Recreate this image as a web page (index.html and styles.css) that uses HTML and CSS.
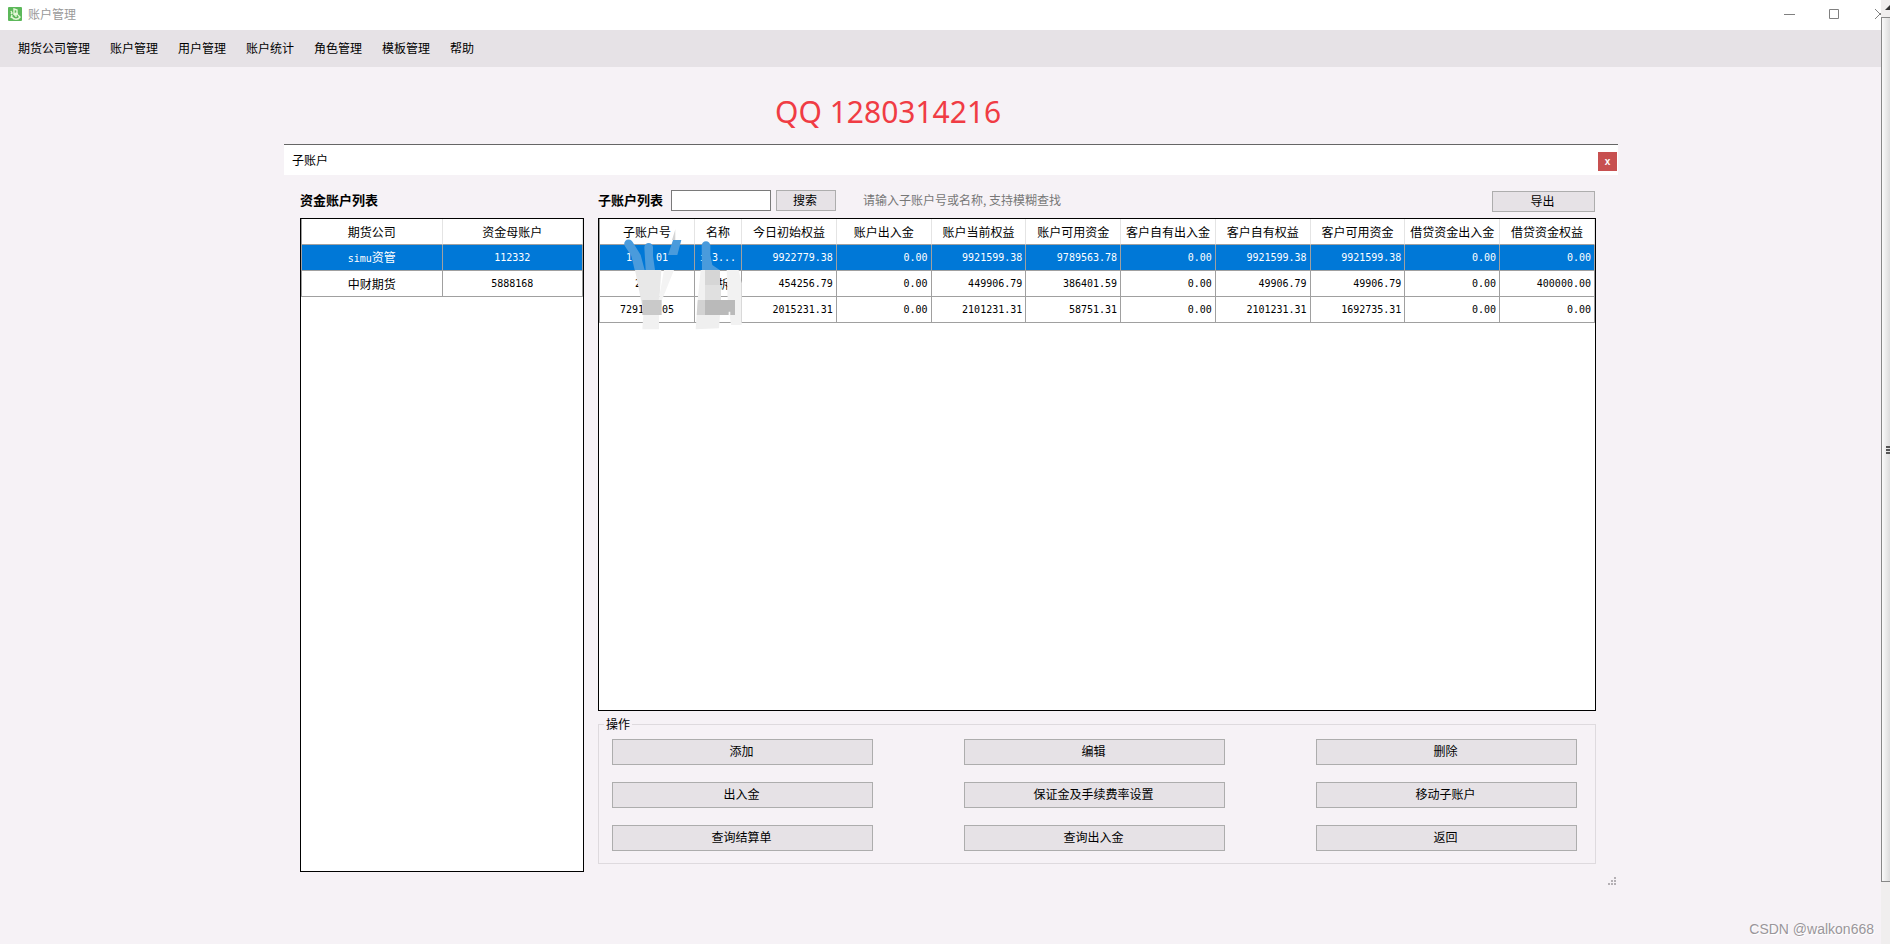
FILE: index.html
```html
<!DOCTYPE html>
<html lang="zh-CN">
<head>
<meta charset="utf-8">
<title>账户管理</title>
<link rel="stylesheet" href="styles.css">
</head>
<body>
<div class="app">
  <header class="titlebar">
    <svg class="app-icon" viewBox="0 0 14 14" aria-hidden="true">
      <rect width="14" height="14" rx="1" fill="#5cb85a"/>
      <path d="M6 2l3 1v3l-3 1zM3 4l1 2-1 1M4 8l-1 3M6 8l4-1M8 7v3M4 10c2 3 6 3 8 0l-2-2" fill="none" stroke="#e4f8d8" stroke-width="1.4"/>
    </svg>
    <span class="app-title">账户管理</span>
    <div class="window-controls">
      <button class="window-button" type="button" aria-label="最小化"><svg width="12" height="12" viewBox="0 0 12 12"><path d="M0 6.5h11" /></svg></button>
      <button class="window-button" type="button" aria-label="最大化"><svg width="12" height="12" viewBox="0 0 12 12"><path d="M.5 1.500h9v9h-9z"/></svg></button>
      <button class="window-button window-close" type="button" aria-label="关闭"><svg width="7" height="12" viewBox="0 0 7 12"><path d="M1 1l5 5-5 5M6.500 5v2"/></svg></button>
    </div>
  </header>
  <nav class="menubar">
    <button type="button">期货公司管理</button>
    <button type="button">账户管理</button>
    <button type="button">用户管理</button>
    <button type="button">账户统计</button>
    <button type="button">角色管理</button>
    <button type="button">模板管理</button>
    <button type="button">帮助</button>
  </nav>
  <main class="workspace">
    <p class="contact">QQ 1280314216</p>
    <section class="dialog">
      <header class="dialog-title">
        <span>子账户</span>
        <button class="dialog-close" type="button" aria-label="关闭">x</button>
      </header>
      <div class="dialog-body">
        <div class="funds">
          <div class="toolbar"><h2>资金账户列表</h2></div>
          <div class="grid-box">
            <table class="grid centered">
              <thead><tr><th>期货公司</th><th>资金母账户</th></tr></thead>
              <tbody>
                <tr class="selected"><td>simu<span class="cjk">资管</span></td><td>112332</td></tr>
                <tr><td class="cjk">中财期货</td><td>5888168</td></tr>
              </tbody>
            </table>
          </div>
        </div>
        <div class="subs">
          <div class="toolbar">
            <h2><label for="search">子账户列表</label></h2>
            <input id="search" type="text">
            <button class="btn search-btn" type="button">搜索</button>
            <span class="hint">请输入子账户号或名称, 支持模糊查找</span>
            <button class="btn export-btn" type="button">导出</button>
          </div>
          <div class="grid-box">
            <table class="grid">
              <colgroup><col class="col-id"><col class="col-name"><col span="9"></colgroup>
              <thead>
                <tr><th>子账户号</th><th>名称</th><th>今日初始权益</th><th>账户出入金</th><th>账户当前权益</th><th>账户可用资金</th><th>客户自有出入金</th><th>客户自有权益</th><th>客户可用资金</th><th>借贷资金出入金</th><th>借贷资金权益</th></tr>
              </thead>
              <tbody>
                <tr class="selected"><td class="mid">1. : 01</td><td class="mid">i 3...</td><td>9922779.38</td><td>0.00</td><td>9921599.38</td><td>9789563.78</td><td>0.00</td><td>9921599.38</td><td>9921599.38</td><td>0.00</td><td>0.00</td></tr>
                <tr><td class="mid">2  .</td><td class="mid cjk">　拆</td><td>454256.79</td><td>0.00</td><td>449906.79</td><td>386401.59</td><td>0.00</td><td>49906.79</td><td>49906.79</td><td>0.00</td><td>400000.00</td></tr>
                <tr><td class="mid">7291   05</td><td class="mid">   ,</td><td>2015231.31</td><td>0.00</td><td>2101231.31</td><td>58751.31</td><td>0.00</td><td>2101231.31</td><td>1692735.31</td><td>0.00</td><td>0.00</td></tr>
              </tbody>
            </table>
            <svg class="smudge" viewBox="90 141 375 312" aria-hidden="true">
              <g fill="#4a9bdc">
                <path d="M104 197a13 13 0 0 1 24-11l24 39 12 45h-30l-10-42z"/>
                <path d="M163 202a13 13 0 0 1 26 0v26l6 42h-28z"/>
                <path d="M249 180h25l-12 45h-28z"/>
                <path d="M335 197a13 13 0 0 1 26 0v28l6 30 22 15h-53z"/>
              </g>
              <path d="M256 148v32h-10z" fill="#d4d4d4"/>
              <path d="M135 270h79l-6 90-2 45h-44z" fill="#e8e8e8"/>
              <path d="M222 270h30l-36 90h-10z" fill="#f3f3f3"/>
              <path d="M160 405h47v43h-50z" fill="#f1f1f1"/>
              <path d="M157 360h58v45h-58z" fill="#c9c9c9"/>
              <path d="M332 270h13v90h-22z" fill="#f1f1f1"/>
              <path d="M345 270h45v45h-45z" fill="#d6d6d6"/>
              <path d="M345 315h48v45h-48z" fill="#e0e0e0"/>
              <path d="M410 270h36l9 40v125h-32l-10-75z" fill="#f2f2f2"/>
              <path d="M323 360h22v45h-25z" fill="#d2d2d2"/>
              <path d="M345 360h90v45h-14v-10h-5v10h-71z" fill="#bababa"/>
              <path d="M320 405h70l-3 40-70 3z" fill="#efefef"/>
            </svg>
          </div>
          <fieldset class="actions">
            <legend>操作</legend>
            <button class="btn" type="button">添加</button>
            <button class="btn" type="button">编辑</button>
            <button class="btn" type="button">删除</button>
            <button class="btn" type="button">出入金</button>
            <button class="btn" type="button">保证金及手续费率设置</button>
            <button class="btn" type="button">移动子账户</button>
            <button class="btn" type="button">查询结算单</button>
            <button class="btn" type="button">查询出入金</button>
            <button class="btn" type="button">返回</button>
          </fieldset>
        </div>
      </div>
      <svg class="grip" viewBox="0 0 8 8" aria-hidden="true"><path d="M6 0h2v2H6zM3 3h2v2H3zM6 3h2v2H6zM0 6h2v2H0zM3 6h2v2H3zM6 6h2v2H6z" fill="#b4b0b4"/></svg>
    </section>
  </main>
  <span class="watermark">CSDN @walkon668</span>
</div>
<div class="scrollbar" aria-hidden="true">
  <svg class="scroll-arrow" viewBox="0 0 9 17"><path d="M9 5v5H4z" fill="#333"/></svg>
  <div class="thumb"><i></i><i></i><i></i></div>
</div>
</body>
</html>
```
FILE: styles.css
```css
* { box-sizing: border-box; }

body {
  margin: 0;
  display: flex;
  min-height: 100vh;
  background: #f6f2f6;
  color: #000;
  font: 12px/16px "Noto Sans CJK SC", sans-serif;
}

button, input { font: inherit; color: inherit; margin: 0; padding: 0; }
h2, p { margin: 0; }

.app { flex: 1; min-width: 0; display: flex; flex-direction: column; position: relative; }

.titlebar {
  height: 30px;
  display: flex;
  align-items: center;
  padding-left: 8px;
  padding-bottom: 2px;
  background: #fff;
  color: #999;
}
.app-icon { width: 14px; height: 14px; margin-right: 6px; }
.window-controls { margin-left: auto; display: flex; gap: 33px; }
.window-button { display: flex; border: 0; background: none; }
.window-button svg { fill: none; stroke: #808080; }

.menubar { height: 37px; display: flex; align-items: center; gap: 20px; padding: 0 18px 2px; background: #e6e2e6; }
.menubar button { border: 0; background: none; }

.workspace { flex: 1; display: flex; flex-direction: column; padding: 23px 263px 59px 284px; }

.contact {
  align-self: flex-start;
  margin: 0 0 10px 491px;
  color: #f03c44;
  font: 30px/44px "Noto Sans", sans-serif;
}

.dialog { flex: 1; display: flex; flex-direction: column; border-top: 1px solid #666; }
.dialog-title {
  height: 30px;
  display: flex;
  align-items: center;
  justify-content: space-between;
  padding: 0 1px 0 8px;
  background: #fff;
}
.dialog-close {
  width: 19px;
  height: 19px;
  margin-top: 3px;
  border: 0;
  background: #c75050;
  color: #fff;
  font: bold 10px/16px "Liberation Sans", sans-serif;
}
.dialog-body { flex: 1; display: flex; gap: 14px; padding: 13px 22px 5px 16px; }
.funds { width: 284px; display: flex; flex-direction: column; }
.subs { flex: 1; min-width: 0; display: flex; flex-direction: column; padding-bottom: 8px; }

.toolbar { height: 30px; display: flex; align-items: flex-start; padding-top: 2px; line-height: 20px; }
.toolbar h2 { font-size: 13px; line-height: 20px; font-weight: bold; }
.toolbar input { width: 100px; height: 21px; margin-left: 8px; border: 1px solid #7a7a7a; background: #fff; }
.btn { border: 1px solid #adadad; background: #e6e2e6; padding: 0 2px 2px 0; line-height: 16px; }
.search-btn { width: 60px; height: 21px; margin-left: 5px; }
.hint { margin-left: 27px; color: #777; }
.export-btn { width: 103px; height: 21px; margin: 1px 1px 0 auto; }

.grid-box { flex: 1; position: relative; border: 1px solid #000; background: #fff; }
.grid { width: 100%; table-layout: fixed; border-collapse: separate; border-spacing: 0; border-left: 1px solid #a0a0a0; }
.grid th, .grid td { height: 26px; padding: 0 3px; border: 0 solid #a0a0a0; border-width: 0 1px 1px 0; overflow: hidden; white-space: pre; }
.grid th { padding: 0; font-weight: normal; border-right-color: #e4e4e4; }
.grid td { padding-top: 1px; text-align: right; font-family: "DejaVu Sans Mono", "Noto Sans CJK SC", monospace; font-size: 10px; line-height: 16px; }
.grid .cjk { font-family: "Noto Sans CJK SC", sans-serif; font-size: 12px; }
.grid .mid, .centered td { text-align: center; }
.grid .selected td { background: #0078d7; color: #fff; }
.col-id { width: 95px; }
.col-name { width: 47px; }
.smudge { position: absolute; left: 21px; top: 8px; width: 125px; height: 104px; }

.actions {
  display: grid;
  grid-template-columns: repeat(3, 1fr);
  gap: 17px 91px;
  margin: 4px 0 0;
  padding: 6px 18px 12px 13px;
  border: 1px solid #dedade;
}
.actions legend { margin-left: -8px; padding: 0 2px; line-height: 18px; }
.actions .btn { height: 26px; }

.grip { width: 8px; height: 8px; align-self: flex-end; margin-right: 2px; }

.watermark {
  position: absolute;
  right: 7px;
  bottom: 6px;
  color: #9a969a;
  font: 14px/18px "Liberation Sans", sans-serif;
  text-shadow: 1px 1px 0 #fff;
}

.scrollbar { width: 9px; display: flex; flex-direction: column; padding-bottom: 62px; background: #f0eeee; }
.scroll-arrow { width: 9px; height: 17px; }
.thumb {
  flex: 1;
  display: flex;
  flex-direction: column;
  justify-content: center;
  align-items: flex-end;
  gap: 1px;
  border: 1px solid #888;
  border-right: 0;
  background: linear-gradient(90deg, #fafafa, #dcdcdc);
}
.thumb i { width: 4px; height: 2px; background: #555; }
```
